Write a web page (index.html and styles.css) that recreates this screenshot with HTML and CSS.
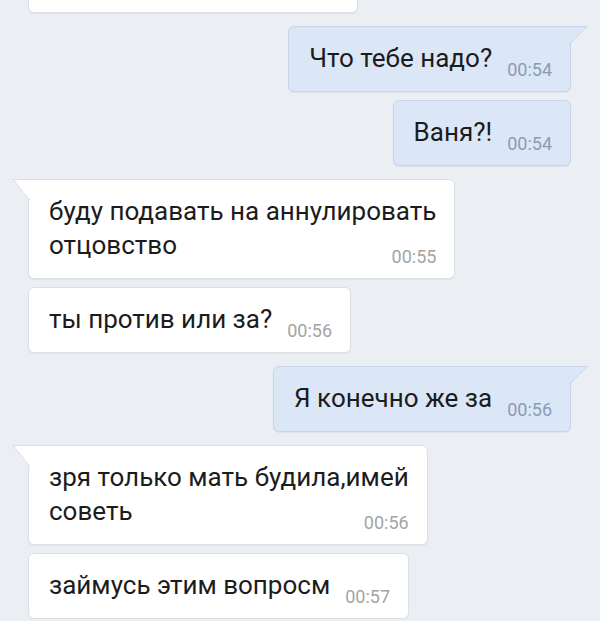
FILE: index.html
```html
<!DOCTYPE html>
<html lang="ru">
<head>
    <meta charset="UTF-8">
    <meta name="viewport" content="width=device-width, initial-scale=1.0">
    <title>Чат</title>
    <link rel="stylesheet" href="styles.css">
</head>
<body>
    <main class="chat">
        <!-- previous message, scrolled mostly out of view -->
        <div class="msg in cut"></div>

        <div class="msg out tail first"><span class="text">Что тебе надо?</span><span class="time">00:54</span></div>
        <div class="msg out"><span class="text">Ваня?!</span><span class="time">00:54</span></div>

        <div class="msg in tail first"><span class="text">буду подавать на аннулировать<br>отцовство</span><span class="time">00:55</span></div>
        <div class="msg in"><span class="text">ты против или за?</span><span class="time">00:56</span></div>

        <div class="msg out tail first"><span class="text">Я конечно же за</span><span class="time">00:56</span></div>

        <div class="msg in tail first"><span class="text">зря только мать будила,имей<br>советь</span><span class="time">00:56</span></div>
        <div class="msg in"><span class="text">займусь этим вопросм</span><span class="time">00:57</span></div>
    </main>
</body>
</html>
```

FILE: styles.css
```css
body {
    margin: 0;
    padding: 0;
    background-color: #ebeef2;
    font-family: Roboto, "Noto Sans", sans-serif;
    color: #1c1c1c;
    overflow: hidden;
}

.chat {
    display: flex;
    flex-direction: column;
    align-items: flex-start;
    padding: 0 29px 0 28px;
    margin-top: -53px;
}

.msg {
    position: relative;
    box-sizing: border-box;
    padding: 14px 18px 11px 20px;
    border: 1px solid #dcdfe4;
    border-radius: 6px;
    background-color: #ffffff;
    box-shadow: 0 1px 1px rgba(0, 0, 0, 0.05);
    margin-top: 8px;
    font-size: 26px;
    line-height: 34px;
}

.msg.first {
    margin-top: 13px;
}

.msg.cut {
    width: 330px;
    height: 66px;
    margin-top: 0;
}

.msg.out {
    align-self: flex-end;
    background-color: #dbe7f7;
    border-color: #c7d5e6;
}

.time {
    float: right;
    margin: 19px 0 0 15px;
    font-size: 18px;
    line-height: 20px;
    color: #a4a4a4;
}

.out .time {
    color: #8b9cb2;
}

/* bubble tails */
.msg.tail::before,
.msg.tail::after {
    content: '';
    position: absolute;
}

.msg.out.tail {
    border-top-right-radius: 0;
}

.msg.out.tail::before {
    top: -1px;
    right: -18px;
    width: 19px;
    height: 19px;
    background-color: #c7d5e6;
    clip-path: polygon(0 0, 100% 0, 0 100%);
}

.msg.out.tail::after {
    top: 0;
    right: -16px;
    width: 17px;
    height: 17px;
    background-color: #dbe7f7;
    clip-path: polygon(0 0, 100% 0, 0 100%);
}

.msg.in.tail {
    border-top-left-radius: 0;
}

.msg.in.tail::before {
    top: -1px;
    left: -17px;
    width: 18px;
    height: 22px;
    background-color: #dcdfe4;
    clip-path: polygon(0 0, 100% 0, 100% 100%);
}

.msg.in.tail::after {
    top: 0;
    left: -15px;
    width: 16px;
    height: 20px;
    background-color: #ffffff;
    clip-path: polygon(0 0, 100% 0, 100% 100%);
}
```
